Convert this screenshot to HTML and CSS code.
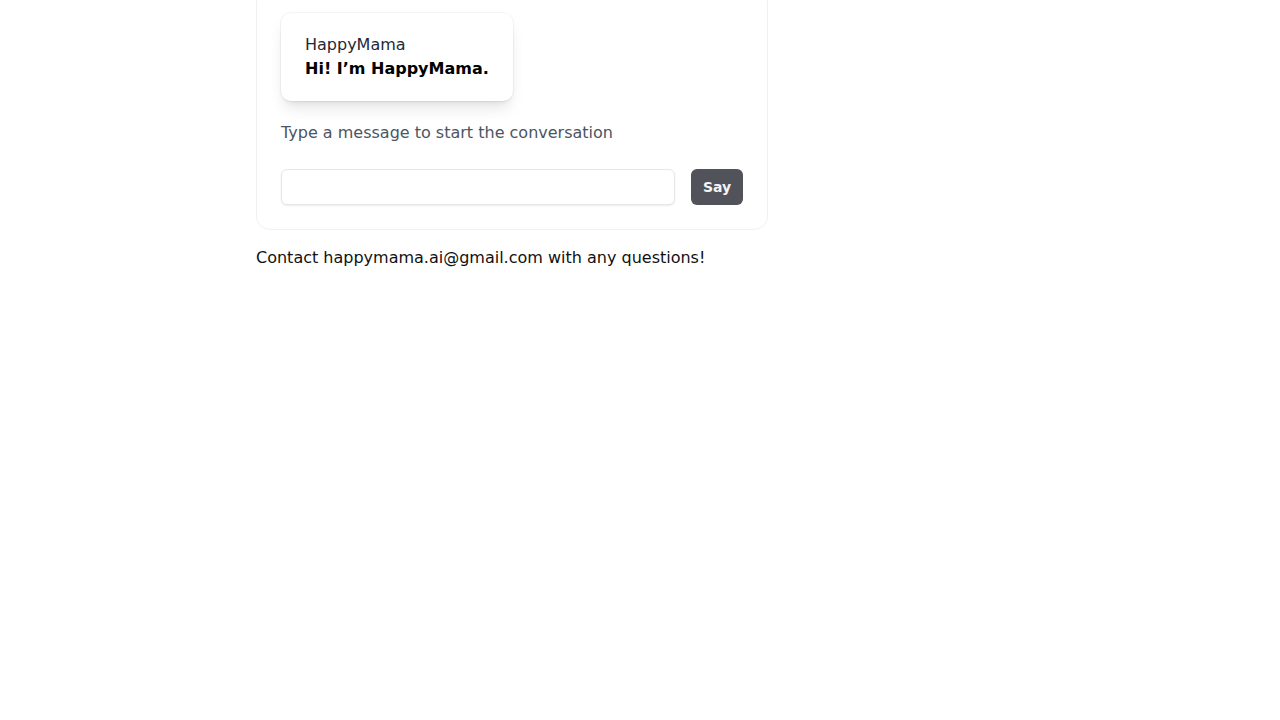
FILE: index.html
```html
<!DOCTYPE html>
<html lang="en">
<head>
    <meta charset="UTF-8">
    <meta name="viewport" content="width=device-width, initial-scale=1.0">
    <title>HappyMama</title>
    <link rel="stylesheet" href="styles.css">
</head>
<body>
    <main class="page">
        <!-- chat box -->
        <section class="chat-card">
            <div class="bubble">
                <div class="bubble-name">HappyMama</div>
                <div class="bubble-text">Hi! I’m HappyMama.</div>
            </div>

            <p class="hint">Type a message to start the conversation</p>

            <form class="say-form">
                <input type="text" class="say-input" aria-label="Message">
                <button type="submit" class="say-button">Say</button>
            </form>
        </section>

        <p class="contact">Contact happymama.ai@gmail.com with any questions!</p>
    </main>
</body>
</html>
```

FILE: styles.css
```css
body {
    margin: 0;
    font-family: "DejaVu Sans", sans-serif;
    font-size: 16px;
    line-height: 24px;
    color: #000;
    background-color: #fff;
}
.page {
    width: 512px;
    margin-left: 256px;
}
.chat-card {
    margin-top: -12px;
    padding: 24px;
    border: 1px solid #f1f1f3;
    border-radius: 14px;
}
.bubble {
    display: inline-block;
    padding: 20px 24px;
    border-radius: 10px;
    background-color: #fff;
    box-shadow: 0 0 0 1px rgba(0, 0, 0, 0.04), 0 10px 15px -3px rgba(0, 0, 0, 0.1), 0 4px 6px -4px rgba(0, 0, 0, 0.1);
}
.bubble-name {
    color: #1f2937;
}
.bubble-text {
    font-weight: bold;
    color: #000;
}
.hint {
    margin: 20px 0 0;
    color: #4b5563;
}
.say-form {
    display: flex;
    gap: 16px;
    margin-top: 24px;
}
.say-input {
    flex: 1;
    height: 36px;
    box-sizing: border-box;
    padding: 0 12px;
    border: 1px solid #e5e7eb;
    border-radius: 6px;
    box-shadow: 0 1px 2px rgba(0, 0, 0, 0.08);
    font-family: inherit;
    font-size: 14px;
}
.say-button {
    width: 52px;
    height: 36px;
    padding: 0;
    border: none;
    border-radius: 6px;
    background-color: #52525b;
    color: #f4f4f5;
    font-family: inherit;
    font-size: 14px;
    font-weight: bold;
    cursor: pointer;
}
.contact {
    margin: 16px 0 0;
    color: #111;
}
```
